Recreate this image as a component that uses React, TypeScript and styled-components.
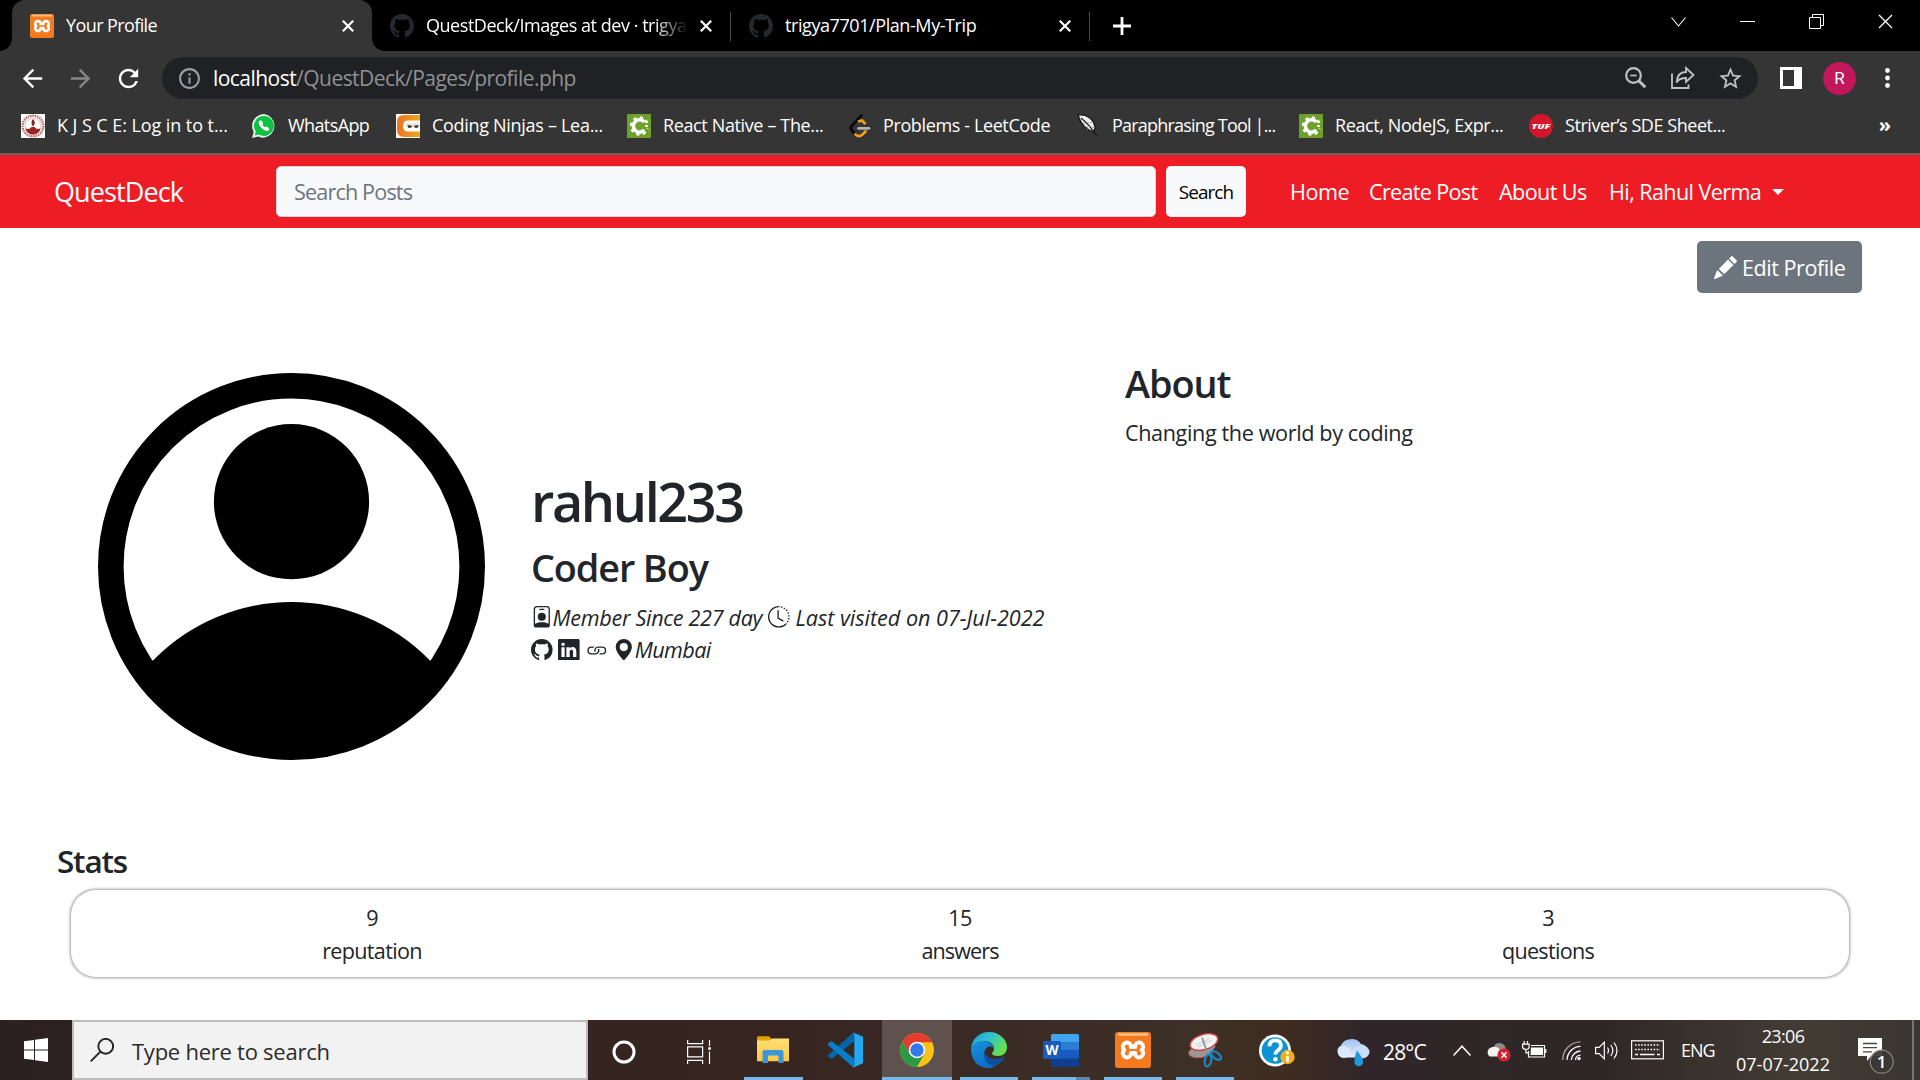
import React from 'react';
import styled, { createGlobalStyle, css } from 'styled-components';
import {
  BsPencilFill, BsPersonBadge, BsClockHistory, BsGithub, BsLinkedin, BsLink, BsGeoAltFill, BsTelephoneFill,
} from 'react-icons/bs';
import { MdArrowBack, MdArrowForward, MdRefresh, MdStarOutline, MdInfoOutline } from 'react-icons/md';

const Global = createGlobalStyle`
  * { box-sizing: border-box; }
  body { margin: 0; background: #fff; font-family: "Open Sans", "Noto Sans", sans-serif; color: #212529; }
  svg { display: block; flex: none; }
`;

const Screen = styled.div`
  width: 1920px;
  height: 1080px;
  display: flex;
  flex-direction: column;
  overflow: hidden;
`;

const Text = styled.span<{ $size?: number; $ls?: number }>`
  font-size: ${p => p.$size ?? 18}px;
  letter-spacing: ${p => p.$ls ?? 0}px;
  white-space: nowrap;
`;

/* ---------- browser chrome ---------- */

const TabStrip = styled.div`
  height: 51px;
  flex: none;
  display: flex;
  align-items: flex-start;
  background: #000;
  color: #fff;
  padding-left: 12px;
`;

const Tab = styled.div<{ $w: number; $active?: boolean }>`
  position: relative;
  width: ${p => p.$w}px;
  height: 51px;
  padding: 1px 18px 0 18px;
  display: flex;
  align-items: center;
  gap: 12px;
  ${p => p.$active && css`
    background: #353535;
    border-radius: 13px 13px 0 0;
    &::before, &::after {
      content: '';
      position: absolute;
      bottom: 0;
      width: 12px;
      height: 12px;
    }
    &::before { left: -12px; background: radial-gradient(circle at 0 0, transparent 11.5px, #353535 12px); }
    &::after { right: -12px; background: radial-gradient(circle at 100% 0, transparent 11.5px, #353535 12px); }
  `}
`;

const TabTitle = styled(Text)<{ $fade?: boolean }>`
  flex: 1;
  overflow: hidden;
  margin-top: -2px;
  ${p => p.$fade && css`mask-image: linear-gradient(90deg, #000 calc(100% - 34px), transparent);`}
`;

const TabDivider = styled.div`
  width: 1px;
  height: 29px;
  margin-top: 12px;
  background: #4a4a4a;
`;

const NewTab = styled.div`
  width: 64px;
  height: 51px;
  display: grid;
  place-items: center;
`;

const WindowControls = styled.div`
  margin-left: auto;
  height: 43px;
  display: flex;
`;

const WindowButton = styled.div<{ $w?: number }>`
  width: ${p => p.$w ?? 69}px;
  display: grid;
  place-items: center;
`;

const Toolbar = styled.div`
  height: 55px;
  flex: none;
  background: #353535;
  display: flex;
  align-items: center;
  padding: 0 0 1px 18px;
  color: #fff;
`;

const NavIcon = styled.div<{ $dim?: boolean }>`
  width: 48px;
  display: flex;
  color: ${p => (p.$dim ? '#868686' : '#fff')};
`;

const Omnibox = styled.div`
  width: 1596px;
  height: 42px;
  border-radius: 21px;
  background: #202124;
  display: flex;
  align-items: center;
  padding: 0 14px 0 15px;
  color: #c0c1c3;
`;

const Url = styled(Text)`
  flex: 1;
  margin-left: 11px;
  color: #8f9194;
`;

const Host = styled.span`color: #fff;`;

const OmniIcons = styled.div`
  display: flex;
  align-items: center;
  gap: 22px;
`;

const SidePanel = styled.div`
  width: 22px;
  height: 22px;
  margin-left: 22px;
  border: 3px solid #fff;
  border-right-width: 8px;
`;

const Avatar = styled.div`
  width: 33px;
  height: 33px;
  margin: 0 29px 0 21px;
  border-radius: 50%;
  background: #c2185b;
  display: grid;
  place-items: center;
  font: 17px Roboto, sans-serif;
`;

const Bookmarks = styled.div`
  height: 47px;
  flex: none;
  background: #353535;
  display: flex;
  padding: 0 29px 7px 21px;
  color: #fff;
`;

const Bookmark = styled.div<{ $w: number }>`
  width: ${p => p.$w}px;
  display: flex;
  align-items: center;
  gap: 12px;
  & > span { margin-top: -2px; }
`;

const Overflow = styled.div`
  margin-left: auto;
  display: flex;
  align-items: center;
  font-size: 20px;
  font-weight: 700;
  padding-bottom: 4px;
`;

/* ---------- site ---------- */

const Navbar = styled.nav`
  height: 75px;
  flex: none;
  border-top: 2px solid #66605f;
  background: #ee1c25;
  color: #fff;
  display: flex;
  align-items: center;
  padding-left: 54px;
`;

const Brand = styled(Text)`width: 222px;`;

const SearchInput = styled.div`
  width: 880px;
  height: 51px;
  padding: 0 17px;
  border: 1px solid #ced4da;
  border-radius: 5px;
  background: #f8f9fa;
  color: #6c757d;
  display: flex;
  align-items: center;
`;

const SearchButton = styled.div`
  width: 80px;
  height: 51px;
  margin: 0 44px 0 10px;
  border-radius: 5px;
  background: #f8f9fa;
  color: #000;
  display: grid;
  place-items: center;
`;

const NavLink = styled(Text)<{ $w: number }>`width: ${p => p.$w}px;`;

const Caret = styled.span`
  border: 6.5px solid transparent;
  border-top-color: #fff;
  border-bottom: 0;
`;

const Page = styled.main`
  flex: 1;
  display: flex;
  flex-direction: column;
  background: #fff;
`;

const EditButton = styled.div`
  align-self: flex-end;
  width: 165px;
  height: 52px;
  margin: 13px 58px 0 0;
  padding-left: 17px;
  border-radius: 5px;
  background: #6c757d;
  color: #fff;
  display: flex;
  align-items: center;
  gap: 5px;
`;

const Profile = styled.section`
  display: flex;
  height: 387px;
  margin-top: 80px;
  padding-left: 98px;
`;

const Identity = styled.div`
  width: 594px;
  margin-left: 46px;
  padding-top: 2px;
  display: flex;
  flex-direction: column;
  justify-content: center;
`;

const Heading = styled.h2<{ $size: number; $ls: number }>`
  margin: 0 0 10.8px;
  font-size: ${p => p.$size}px;
  letter-spacing: ${p => p.$ls}px;
  font-weight: 560;
  line-height: 1.2;
`;

const MetaRow = styled.div`
  display: flex;
  align-items: center;
  height: 32.4px;
  font-style: italic;
  gap: 5.8px;
`;

const MetaItem = styled.span<{ $gap?: number }>`
  display: flex;
  align-items: center;
  gap: ${p => p.$gap ?? 0}px;
`;

const About = styled.div`margin-top: -12px;`;

const AboutText = styled(Text)`line-height: 32.4px; display: block;`;

const StatsTitle = styled(Heading)`margin: 82px 0 10px 57px; line-height: 38px;`;

const StatsCard = styled.section`
  display: grid;
  grid-template-columns: repeat(3, 1fr);
  width: 1778px;
  height: 87px;
  margin-left: 71px;
  padding: 1px 7px 0;
  align-items: center;
  border-radius: 25px;
  box-shadow: 0 0 3px 0.5px #9d9d9d;
`;

const Stat = styled.div`
  display: flex;
  flex-direction: column;
  align-items: center;
  line-height: 33px;
`;

/* ---------- taskbar ---------- */

const Taskbar = styled.footer`
  height: 60px;
  flex: none;
  display: flex;
  color: #fff;
  background: linear-gradient(90deg, #2c2122 0, #35241f 580px, #372522 800px, #3a2c25 1000px, #3d3027 1200px, #3f2c20 1285px, #30262a 1360px, #2f2726 1600px, #433c34 1800px, #393532 1920px);
`;

const StartButton = styled.div`
  width: 72px;
  flex: none;
  display: grid;
  place-items: center;
`;

const TaskSearch = styled.div`
  width: 516px;
  flex: none;
  border: 2px solid #bdbdbd;
  background: #f2f2f2;
  color: #2b2b2b;
  display: flex;
  align-items: center;
  padding: 2px 0 0 16px;
  gap: 18px;
  & > svg { margin-top: -2px; }
`;

const TaskCell = styled.div<{ $w?: number; $active?: boolean }>`
  width: ${p => p.$w ?? 72}px;
  flex: none;
  display: flex;
  flex-direction: column;
  align-items: center;
  background: ${p => (p.$active ? 'linear-gradient(#5f524e, #5f524e) center / 70px 100% no-repeat' : 'none')};
`;

const TaskIcon = styled.div`
  flex: 1;
  display: grid;
  place-items: center;
  padding-top: 3px;
`;

const Underline = styled.div<{ $w: number; $split?: boolean }>`
  width: ${p => p.$w}px;
  height: 3px;
  background: ${p => (p.$split ? 'linear-gradient(90deg, #76b9ed 44px, #5a86aa 44px)' : '#76b9ed')};
`;

const Tray = styled.div`
  flex: 1;
  min-width: 0;
  display: flex;
  align-items: center;
  padding-left: 23px;
`;

const TrayItem = styled.div<{ $w: number; $dy?: number }>`
  width: ${p => p.$w}px;
  flex: none;
  display: flex;
  padding-top: ${p => p.$dy ?? 0}px;
`;

const Clock = styled.div`
  width: 130px;
  flex: none;
  padding-right: 20px;
  display: flex;
  flex-direction: column;
  align-items: center;
  line-height: 28px;
`;

const ShowDesktop = styled.div`
  align-self: stretch;
  flex: none;
  width: 8px;
  margin-left: auto;
  border-left: 2px solid #77736f;
`;

/* ---------- drawings ---------- */

const Cross = ({ s = 12, w = 2.2 }: { s?: number; w?: number }) => (
  <svg width={s} height={s} viewBox="0 0 12 12" stroke="#fff" strokeWidth={(w * 12) / s}><path d="M.8.8l10.4 10.4M11.2.8L.8 11.2" /></svg>
);

const Portrait = () => (
  <svg width="387" height="387" viewBox="0 0 387 387">
    <defs><clipPath id="disc"><circle cx="193.5" cy="193.5" r="192" /></clipPath></defs>
    <circle cx="193.500" cy="193.500" r="180.700" fill="none" stroke="#000" strokeWidth="25.600" />
    <circle cx="193.500" cy="128.700" r="77.600" />
    <circle cx="193.500" cy="422" r="193" clipPath="url(#disc)" />
    <path d="M54.800 287.700L20 270V387H367V270L332.200 287.700z" clipPath="url(#disc)" />
  </svg>
);

const Xampp = ({ s }: { s: number }) => (
  <svg width={s} height={s} viewBox="0 0 36 36">
    <rect width="36" height="36" rx="3" fill="#f47a20" />
    <path d="M4 2.500h28" stroke="#ffc18e" strokeWidth="2.400" strokeLinecap="round" />
    <path d="M15.800 15V13A4.200 4.200 0 1 0 9.300 18A4.200 4.200 0 1 0 15.800 23V21H20.200V23A4.200 4.200 0 1 0 26.700 18A4.200 4.200 0 1 0 20.200 13V15z" fill="none" stroke="#fff" strokeWidth="3.900" strokeLinejoin="round" />
  </svg>
);

const Gear = () => (
  <svg width="24" height="24" viewBox="0 0 24 24">
    <rect width="24" height="24" fill="#6da12a" />
    <circle cx="12.500" cy="12" r="8.200" fill="none" stroke="#fff" strokeWidth="3" strokeDasharray="3.100 3.340" />
    <path d="M17.300 8a6.200 6.200 0 1 0 0 8" fill="none" stroke="#fff" strokeWidth="3.600" />
    <path d="M15 9.400h9v5.200h-9z" fill="#6da12a" /><path d="M18 11h3v2h-3z" fill="#fff" />
  </svg>
);

const Kjsce = () => (
  <svg width="24" height="24" viewBox="0 0 24 24">
    <rect width="24" height="24" fill="#fff" />
    <circle cx="12" cy="12" r="10.400" fill="none" stroke="#b56a66" strokeWidth="2.200" strokeDasharray="1.600 .8" />
    <circle cx="12" cy="12" r="8" fill="none" stroke="#d3a5a2" strokeWidth=".7" />
    <path d="M12 5c2.600 3 2 5 0 7.500c-1.800-2.500-2.200-4.500 0-7.500z" fill="#8e1f1c" />
    <path d="M4.500 14.500c3 1 4.500.5 6-1.500h3c1.500 2 3 2.500 6 1.500c-1 4-4 6-7.500 6s-6.500-2-7.500-6z" fill="#9b2422" />
  </svg>
);

const WhatsApp = () => (
  <svg width="24" height="24" viewBox="0 0 24 24">
    <path d="M12 0a12 12 0 0 1 0 23.800a12 12 0 0 1-5.600-1.400L0 24l1.700-6A12 12 0 0 1 12 0z" fill="#e9f7ec" />
    <path d="M12 1.900a10 10 0 1 1-5.200 18.600L2.700 21.600l1.100-4A10 10 0 0 1 12 1.900z" fill="#0dc143" />
    <BsTelephoneFill x={6.400} y={6.200} size={11} color="#fff" />
  </svg>
);

const Ninja = () => (
  <svg width="24" height="24" viewBox="0 0 24 24">
    <defs><linearGradient id="nj"><stop offset="0" stopColor="#ee7423" /><stop offset="1" stopColor="#f0a51c" /></linearGradient></defs>
    <rect width="24" height="24" fill="#fff" />
    <path d="M8 1h16v22H8q-7 0-7-7V8q0-7 7-7z" fill="url(#nj)" />
    <path d="M12 6.500h12v11H12q-5 0-5-5.500t5-5.500z" fill="#fff" />
    <path d="M10 9h14v4.500H11z" fill="#f3e6d8" /><path d="M11.500 11l4.500.8-.8 1.900h-3zM22.500 11l-4.500.8.8 1.900h3z" fill="#3b3433" />
  </svg>
);

const Leet = () => (
  <svg width="25" height="24" viewBox="0 0 25 24" fill="none" strokeWidth="2.700" strokeLinecap="round">
    <path d="M15.500 1.500L5.500 12q-1.500 2 0 4l4 4.500" stroke="#080808" />
    <path d="M12 7.500l4-1l3.500 3.500" stroke="#f4a11d" strokeLinecap="butt" />
    <path d="M9.500 20.500q3.500 3 6.500.5l3.500-3.500" stroke="#f4a11d" />
    <path d="M12.500 14.300h10.500" stroke="#b3b3b3" />
  </svg>
);

const Feather = () => (
  <svg width="24" height="24" viewBox="0 0 24 24">
    <path d="M2 1c8-1 15 3 17 12l-1 5c-7-2-13-7-16-17z" fill="#f4f4f4" stroke="#161616" strokeWidth="1.300" />
    <path d="M5 4c5 4 10 9 16 18" stroke="#161616" strokeWidth="1.200" fill="none" />
    <path d="M10 8l6 1M13 12l6 2M8 8l1 5M11 12l1 4" stroke="#999" strokeWidth=".7" />
  </svg>
);

const Tuf = () => (
  <svg width="24" height="24" viewBox="0 0 24 24">
    <circle cx="12" cy="12" r="12" fill="#d3162b" />
    <text x="12" y="14.500" fontSize="7" fontWeight="800" fontStyle="italic" textAnchor="middle" fill="#fff" textLength="19" lengthAdjust="spacingAndGlyphs">TUF</text>
  </svg>
);

const ZoomOut = () => (
  <svg width="24" height="24" viewBox="0 0 24 24" fill="none" stroke="#c0c1c3" strokeWidth="2.200">
    <circle cx="9.500" cy="9.500" r="7.300" /><path d="M14.800 14.800l6.500 6.500" strokeWidth="3" /><path d="M6.300 9.500h6.400" strokeWidth="1.700" />
  </svg>
);

const Share = () => (
  <svg width="25" height="24" viewBox="0 0 25 24" fill="none" stroke="#c0c1c3" strokeWidth="1.800">
    <path d="M2 7.500V22h16.500v-3.500" /><path d="M16 2l7.500 7-7.500 7v-4c-4 0-7.500 1-9.500 4.500c.5-7 4-10.500 9.500-10.500z" strokeLinejoin="miter" />
  </svg>
);

const Windows = () => (
  <svg width="24" height="24" viewBox="0 0 24 24" fill="#fff">
    <path d="M0 3.300L10 2v9.500H0zM11 1.800L24 0v11.500H11zM0 12.500h10V22L0 20.700zM11 12.500h13V24L11 22.200z" />
  </svg>
);

const Magnifier = () => (
  <svg width="24" height="24" viewBox="0 0 24 24" fill="none" stroke="#222" strokeWidth="1.900">
    <circle cx="15.700" cy="8.300" r="7.400" /><path d="M10.200 13.800L.7 23.300" />
  </svg>
);

const TaskView = () => (
  <svg width="24" height="24" viewBox="0 0 24 24" fill="none" stroke="#fff" strokeWidth="1.200">
    <path d="M.6 0v3.600h15V0M.6 24v-3.600h15V24M.6 6.800h15v10h-15zM22.500 0v6M22.500 11.500V24" /><rect x="21.200" y="7.200" width="2.600" height="2.600" fill="#fff" stroke="none" />
  </svg>
);

const Explorer = () => (
  <svg width="32" height="28" viewBox="0 0 32 28">
    <defs><linearGradient id="ex" x2="0" y2="1"><stop offset="0" stopColor="#ffdf7a" /><stop offset="1" stopColor="#fcc93c" /></linearGradient></defs>
    <path d="M0 1.500Q0 .3 1.200.3H12l3 3V8H0z" fill="#e2a003" />
    <path d="M0 4.500h13l2-2h17v22.800H0z" fill="url(#ex)" />
    <path d="M5.500 27V16.300q0-2.300 2.300-2.300h16.400q2.300 0 2.300 2.300V27h-5v-6.500q0-1-1-1h-8.500q-1 0-1 1V27z" fill="#3c96dc" />
  </svg>
);

const VSCode = () => (
  <svg width="36" height="36" viewBox="0 0 36 36">
    <path d="M1 24.500l3.500 2.500L27 9.500V0L1.500 22.500q-1.300 1-.5 2z" fill="#0466a9" />
    <path d="M1 11.500l3.500-2.500L27 26.500V36L1.500 13.500q-1.300-1-.5-2z" fill="#087ecb" />
    <path d="M26 .3L36 4.800v26.400L26 35.700q1.300-.8 1.300-2.700V3Q27.300 1 26 .3z" fill="#23a9f2" />
  </svg>
);

const Chrome = () => (
  <svg width="34" height="34" viewBox="0 0 34 34">
    <circle cx="17" cy="17" r="17" fill="#fbc116" />
    <path d="M2.300 8.500A17 17 0 0 1 31.700 8.500l.4.800H17L9.500 20.500z" fill="#e33b2e" />
    <path d="M2.300 8.500A17 17 0 0 0 17 34l7-12.500L17 17l-7 4z" fill="#2a9a47" />
    <circle cx="17" cy="17" r="8.300" fill="#fff" /><circle cx="17" cy="17" r="6.700" fill="#3578e8" />
  </svg>
);

const Edge = () => (
  <svg width="36" height="36" viewBox="0 0 36 36">
    <defs>
      <linearGradient id="e1" x1="0" y1="0" x2="1" y2=".5"><stop offset="0" stopColor="#1d9fdc" /><stop offset=".5" stopColor="#2fc2cf" /><stop offset="1" stopColor="#66e04f" /></linearGradient>
      <linearGradient id="e2" x1="0" y1="0" x2=".5" y2="1"><stop offset="0" stopColor="#1994dc" /><stop offset="1" stopColor="#0a6cc8" /></linearGradient>
    </defs>
    <path d="M0 17C1 6 9 0 18 0c11 0 18 8 18 15c0 6-4 9-9 9c-4 0-6-1-6-2.500c0-1.300 2-2 2-5c0-4-4-7.500-10-7.500C7 9 2 12 0 17z" fill="url(#e1)" />
    <path d="M0 17C2 11 7 9 12 9c6 0 10 3.500 10.500 7c-3-3.500-9-1-9 5c0 7 5 12 11 12.500C21 36 19 36 17 36C7 36 0 28 0 17z" fill="url(#e2)" />
    <path d="M13.500 19c-2 8 3 15 11 15c4-2 7.500-5 9-8.500c.3-1-.5-1.300-1.200-.8C25 29 15 27 13.500 19z" fill="#114f9c" />
  </svg>
);

const Word = () => (
  <svg width="36" height="33" viewBox="0 0 36 33">
    <rect x="8" y="0" width="28" height="33" rx="1.500" fill="#103f91" />
    <path d="M8 1.500Q8 0 9.500 0h25Q36 0 36 1.500V8H8z" fill="#41a5ee" /><path d="M8 8h28v8H8z" fill="#2b7cd3" /><path d="M8 16h28v8.500H8z" fill="#185abd" />
    <rect x="0" y="7" width="18" height="18" rx="1.500" fill="#185abd" />
    <text x="9" y="21" fontSize="13.500" fontWeight="700" textAnchor="middle" fill="#fff">W</text>
  </svg>
);

const Snip = () => (
  <svg width="35" height="35" viewBox="0 0 35 35">
    <ellipse cx="13" cy="18.500" rx="12.500" ry="6" transform="rotate(-10 13 18.500)" fill="#9c9894" stroke="#c04b48" strokeWidth=".8" />
    <ellipse cx="16" cy="9" rx="14.300" ry="7.600" transform="rotate(-17 16 9)" fill="#f3f3f3" stroke="#d63f41" strokeWidth="1.500" />
    <path d="M8 12l13-6M10 14l14-7" stroke="#cfd2d4" strokeWidth="1.200" />
    <path d="M14 4.500l6 17M27 13l-8 7.500" stroke="#8e959b" strokeWidth="1.800" />
    <ellipse cx="20" cy="27.500" rx="3.200" ry="6" fill="none" stroke="#1d84c4" strokeWidth="2.200" transform="rotate(10 20 27.500)" />
    <ellipse cx="28" cy="22.500" rx="3" ry="6" fill="none" stroke="#1d84c4" strokeWidth="2.200" transform="rotate(-52 28 22.500)" />
  </svg>
);

const Help = () => (
  <svg width="36" height="33" viewBox="0 0 36 33">
    <circle cx="16" cy="16.500" r="16" fill="#fff" /><circle cx="16" cy="16.500" r="13.300" fill="#0c93d6" />
    <path d="M10.500 12.300q0-6 5.700-6t5.700 5.200q0 2.700-2.800 4.700t-2.700 4.300" fill="none" stroke="#fff" strokeWidth="3.800" /><circle cx="16.400" cy="25.300" r="2.300" fill="#fff" />
    <circle cx="28.500" cy="23" r="7.200" fill="#f5ae1c" /><path d="M28.500 22v6" stroke="#fff" strokeWidth="2.600" /><circle cx="28.500" cy="18.800" r="1.600" fill="#fff" />
  </svg>
);

const Weather = () => (
  <svg width="34" height="30" viewBox="0 0 34 30">
    <defs><linearGradient id="we" x2="0" y2="1"><stop offset="0" stopColor="#9fbff2" /><stop offset="1" stopColor="#e9f1fd" /></linearGradient></defs>
    <path d="M7 20.500A7 6.500 0 0 1 5 8.500A11 9.500 0 0 1 25 7a8 7 0 0 1 1 13.500z" fill="url(#we)" />
    <circle cx="8" cy="15" r="6" fill="#dce9fc" /><ellipse cx="26" cy="15" rx="7.500" ry="6.500" fill="#c9ddfa" />
    <path d="M21 13.500c3 4 6 8 6 11.500a4.300 4.300 0 0 1-8.600 0c0-4 .6-7 2.600-11.500z" fill="#1f98dc" />
  </svg>
);

const CloudError = () => (
  <svg width="25" height="21" viewBox="0 0 25 21">
    <path d="M8 5.500a6 5.500 0 0 1 11.500 1.500v6H8z" fill="#8d8a88" />
    <path d="M4 15.500a5 5 0 0 1 1-9a6 5 0 0 1 9 3l4 6z" fill="#f4f4f4" />
    <circle cx="18" cy="14" r="6.600" fill="#d2202f" /><path d="M15.500 11.300l5 5.400M20.500 11.300l-5 5.400" stroke="#fff" strokeWidth="1.500" />
  </svg>
);

const Battery = () => (
  <svg width="25" height="18" viewBox="0 0 25 18" fill="none" stroke="#fff" strokeWidth="1.200">
    <path d="M9 4.500h13.500v11.500H6.500v-6M23.800 8v4M2.200 0v3M5.500 0v3M.6 3.200h6.500v2.500q0 2.600-3.200 2.600T.6 5.700zM3.900 8.300v3.500h2.500" /><path d="M9 6.600h12v7.400H8.500z" fill="#fff" stroke="none" />
  </svg>
);

const Wifi = () => (
  <svg width="20" height="20" viewBox="0 0 20 20" fill="none" strokeWidth="1.300">
    <path d="M.7 19A18 18 0 0 1 18.500.8" stroke="#a7a3a2" /><path d="M5 19A14 14 0 0 1 18.500 5.300M9.300 19a9.500 9.500 0 0 1 9.200-9M13.500 19a5 5 0 0 1 5-4.800" stroke="#fff" /><circle cx="17" cy="17.500" r="1.700" fill="#fff" />
  </svg>
);

const Speaker = () => (
  <svg width="24" height="19" viewBox="0 0 24 19" fill="none" stroke="#fff" strokeWidth="1.200">
    <path d="M.6 6.300h3.600L9.300 1.200v16.600L4.200 12.700H.6z" /><path d="M12.500 6.500q2 3 0 6M15.800 4q4 5.500 0 11M19 1.500q6 8 0 16" />
  </svg>
);

const Keyboard = () => (
  <svg width="33" height="20" viewBox="0 0 33 20" fill="none" stroke="#fff">
    <rect x=".6" y=".8" width="31.800" height="18" strokeWidth="1.200" />
    <path d="M4 5h25M4 9.500h25" strokeWidth="1.500" strokeDasharray="1.600 1.500" /><path d="M4 14.500h3M9 14.500h14.500M26 14.500h3" strokeWidth="1.300" />
  </svg>
);

const Notification = () => (
  <svg width="38" height="38" viewBox="0 0 38 38">
    <path d="M0 0h24v18H13l-4 5v-5H0z" fill="#fff" /><path d="M5 5.500h14M5 9.700h14M5 13.800h9" stroke="#4a4540" strokeWidth="1.300" />
    <circle cx="23.700" cy="23.700" r="11.500" fill="#3a3735" fillOpacity=".93" stroke="#8b8784" strokeWidth="1.200" />
    <text x="23.700" y="29.700" fontSize="17" fontWeight="600" textAnchor="middle" fill="#fff">1</text>
  </svg>
);

const bookmarks: { icon: React.ReactNode; label: string; ls: number; w: number }[] = [
  { icon: <Kjsce />, label: 'K J S C E: Log in to t...', ls: -0.07, w: 231 },
  { icon: <WhatsApp />, label: 'WhatsApp', ls: -0.6, w: 144 },
  { icon: <Ninja />, label: 'Coding Ninjas – Lea...', ls: -0.3, w: 231 },
  { icon: <Gear />, label: 'React Native – The...', ls: -0.37, w: 219 },
  { icon: <Leet />, label: 'Problems - LeetCode', ls: -0.38, w: 230 },
  { icon: <Feather />, label: 'Paraphrasing Tool |...', ls: -0.8, w: 223 },
  { icon: <Gear />, label: 'React, NodeJS, Expr...', ls: -0.4, w: 230 },
  { icon: <Tuf />, label: 'Striver’s SDE Sheet...', ls: -0.45, w: 210 },
];

const stats: [string, string, number][] = [
  ['9', 'reputation', -0.69],
  ['15', 'answers', -0.9],
  ['3', 'questions', -0.72],
];

export default function App() {
  return (
    <Screen>
      <Global />
      <TabStrip>
        <Tab $w={360} $active>
          <Xampp s={24} />
          <TabTitle $ls={-0.6}>Your Profile</TabTitle>
          <Cross />
        </Tab>
        <Tab $w={358}>
          <BsGithub size={24} color="#24292e" />
          <TabTitle $ls={-0.46} $fade>QuestDeck/Images at dev · trigya</TabTitle>
          <Cross />
        </Tab>
        <TabDivider />
        <Tab $w={358}>
          <BsGithub size={24} color="#24292e" />
          <TabTitle $ls={-0.42}>trigya7701/Plan-My-Trip</TabTitle>
          <Cross />
        </Tab>
        <TabDivider />
        <NewTab><svg width="18" height="18" viewBox="0 0 18 18" stroke="#fff" strokeWidth="2.800"><path d="M9 0v18M0 9h18" /></svg></NewTab>
        <WindowControls>
          <WindowButton><svg width="15" height="10" viewBox="0 0 15 10" fill="none" stroke="#fff" strokeWidth="1.100"><path d="M.5.500l7 8.500 7-8.500" /></svg></WindowButton>
          <WindowButton><svg width="15" height="1" viewBox="0 0 15 1"><path d="M0 0h15v1H0z" fill="#fff" /></svg></WindowButton>
          <WindowButton><svg width="15" height="15" viewBox="0 0 15 15" fill="none" stroke="#fff"><path d="M.5 3.500h11v11H.5zM3.500 3.500v-3h11v11h-3" /></svg></WindowButton>
          <WindowButton><Cross s={15} w={1.300} /></WindowButton>
        </WindowControls>
      </TabStrip>

      <Toolbar>
        <NavIcon><MdArrowBack size={29} /></NavIcon>
        <NavIcon $dim><MdArrowForward size={29} /></NavIcon>
        <NavIcon><MdRefresh size={29} /></NavIcon>
        <Omnibox>
          <MdInfoOutline size={25} color="#9aa0a6" />
          <Url $size={21} $ls={-0.54}><Host>localhost</Host>/QuestDeck/Pages/profile.php</Url>
          <OmniIcons><ZoomOut /><Share /><MdStarOutline size={27} /></OmniIcons>
        </Omnibox>
        <SidePanel />
        <Avatar>R</Avatar>
        <svg width="5" height="24" viewBox="0 0 5 24" fill="#fff"><circle cx="2.500" cy="4.500" r="2.400" /><circle cx="2.500" cy="12" r="2.400" /><circle cx="2.500" cy="19.500" r="2.400" /></svg>
      </Toolbar>

      <Bookmarks>
        {bookmarks.map(b => (
          <Bookmark key={b.label} $w={b.w}>{b.icon}<Text $ls={b.ls}>{b.label}</Text></Bookmark>
        ))}
        <Overflow>»</Overflow>
      </Bookmarks>

      <Navbar>
        <Brand $size={27} $ls={-0.9}>QuestDeck</Brand>
        <SearchInput><Text $size={21.6} $ls={-0.84}>Search Posts</Text></SearchInput>
        <SearchButton><Text $size={18.9} $ls={-0.9}>Search</Text></SearchButton>
        <NavLink $w={79} $size={21.6} $ls={-0.5}>Home</NavLink>
        <NavLink $w={130} $size={21.6} $ls={-0.68}>Create Post</NavLink>
        <NavLink $w={110} $size={21.6} $ls={-0.59}>About Us</NavLink>
        <NavLink $w={163} $size={21.6} $ls={-0.6}>Hi, Rahul Verma</NavLink>
        <Caret />
      </Navbar>

      <Page>
        <EditButton><BsPencilFill size={23} /><Text $size={21.6} $ls={-0.48}>Edit Profile</Text></EditButton>
        <Profile>
          <Portrait />
          <Identity>
            <Heading as="h1" $size={54} $ls={-2.4}>rahul233</Heading>
            <Heading $size={37.800} $ls={-1.1}>Coder Boy</Heading>
            <MetaRow>
              <MetaItem><BsPersonBadge size={21.600} /><Text $size={21.6} $ls={-0.31}>Member Since 227 day</Text></MetaItem>
              <MetaItem $gap={5.800}><BsClockHistory size={21.600} /><Text $size={21.6} $ls={-0.02}>Last visited on 07-Jul-2022</Text></MetaItem>
            </MetaRow>
            <MetaRow>
              <BsGithub size={21.600} /><BsLinkedin size={21.600} /><BsLink size={21.600} />
              <MetaItem><BsGeoAltFill size={21.600} /><Text $size={21.6} $ls={-0.6}>Mumbai</Text></MetaItem>
            </MetaRow>
          </Identity>
          <About>
            <Heading $size={37.800} $ls={-1}>About</Heading>
            <AboutText $size={21.6} $ls={-0.37}>Changing the world by coding</AboutText>
          </About>
        </Profile>
        <StatsTitle $size={31.500} $ls={-1.2}>Stats</StatsTitle>
        <StatsCard>
          {stats.map(([n, label, ls]) => (
            <Stat key={label}><Text $size={21.6} $ls={-0.6}>{n}</Text><Text $size={21.6} $ls={ls}>{label}</Text></Stat>
          ))}
        </StatsCard>
      </Page>

      <Taskbar>
        <StartButton><Windows /></StartButton>
        <TaskSearch><Magnifier /><Text $size={22} $ls={-0.25}>Type here to search</Text></TaskSearch>
        <TaskCell><TaskIcon><svg width="24" height="24" viewBox="0 0 24 24"><circle cx="12" cy="12" r="10" fill="none" stroke="#fff" strokeWidth="3" /></svg></TaskIcon></TaskCell>
        <TaskCell $w={77}><TaskIcon><TaskView /></TaskIcon></TaskCell>
        <TaskCell><TaskIcon><Explorer /></TaskIcon><Underline $w={59} /></TaskCell>
        <TaskCell><TaskIcon><VSCode /></TaskIcon><Underline $w={0} /></TaskCell>
        <TaskCell $active><TaskIcon><Chrome /></TaskIcon><Underline $w={70} /></TaskCell>
        <TaskCell><TaskIcon><Edge /></TaskIcon><Underline $w={58} /></TaskCell>
        <TaskCell><TaskIcon><Word /></TaskIcon><Underline $w={58} $split /></TaskCell>
        <TaskCell><TaskIcon><Xampp s={36} /></TaskIcon><Underline $w={58} /></TaskCell>
        <TaskCell><TaskIcon><Snip /></TaskIcon><Underline $w={58} /></TaskCell>
        <TaskCell><TaskIcon><Help /></TaskIcon><Underline $w={0} /></TaskCell>
        <Tray>
          <TrayItem $w={47} $dy={4}><Weather /></TrayItem>
          <TrayItem $w={70} $dy={4}><Text $size={21} $ls={-0.84}>28°C</Text></TrayItem>
          <TrayItem $w={33}><svg width="18" height="11" viewBox="0 0 18 11" fill="none" stroke="#fff" strokeWidth="1.500"><path d="M.5 10.500L9 1.200l8.500 9.300" /></svg></TrayItem>
          <TrayItem $w={36} $dy={3}><CloudError /></TrayItem>
          <TrayItem $w={40}><Battery /></TrayItem>
          <TrayItem $w={33} $dy={2}><Wifi /></TrayItem>
          <TrayItem $w={36}><Speaker /></TrayItem>
          <TrayItem $w={50}><Keyboard /></TrayItem>
          <TrayItem $w={47}><Text $ls={-1}>ENG</Text></TrayItem>
          <Clock><Text $ls={-0.65}>23:06</Text><Text>07-07-2022</Text></Clock>
          <TrayItem $w={46} $dy={13}><Notification /></TrayItem>
          <ShowDesktop />
        </Tray>
      </Taskbar>
    </Screen>
  );
}
